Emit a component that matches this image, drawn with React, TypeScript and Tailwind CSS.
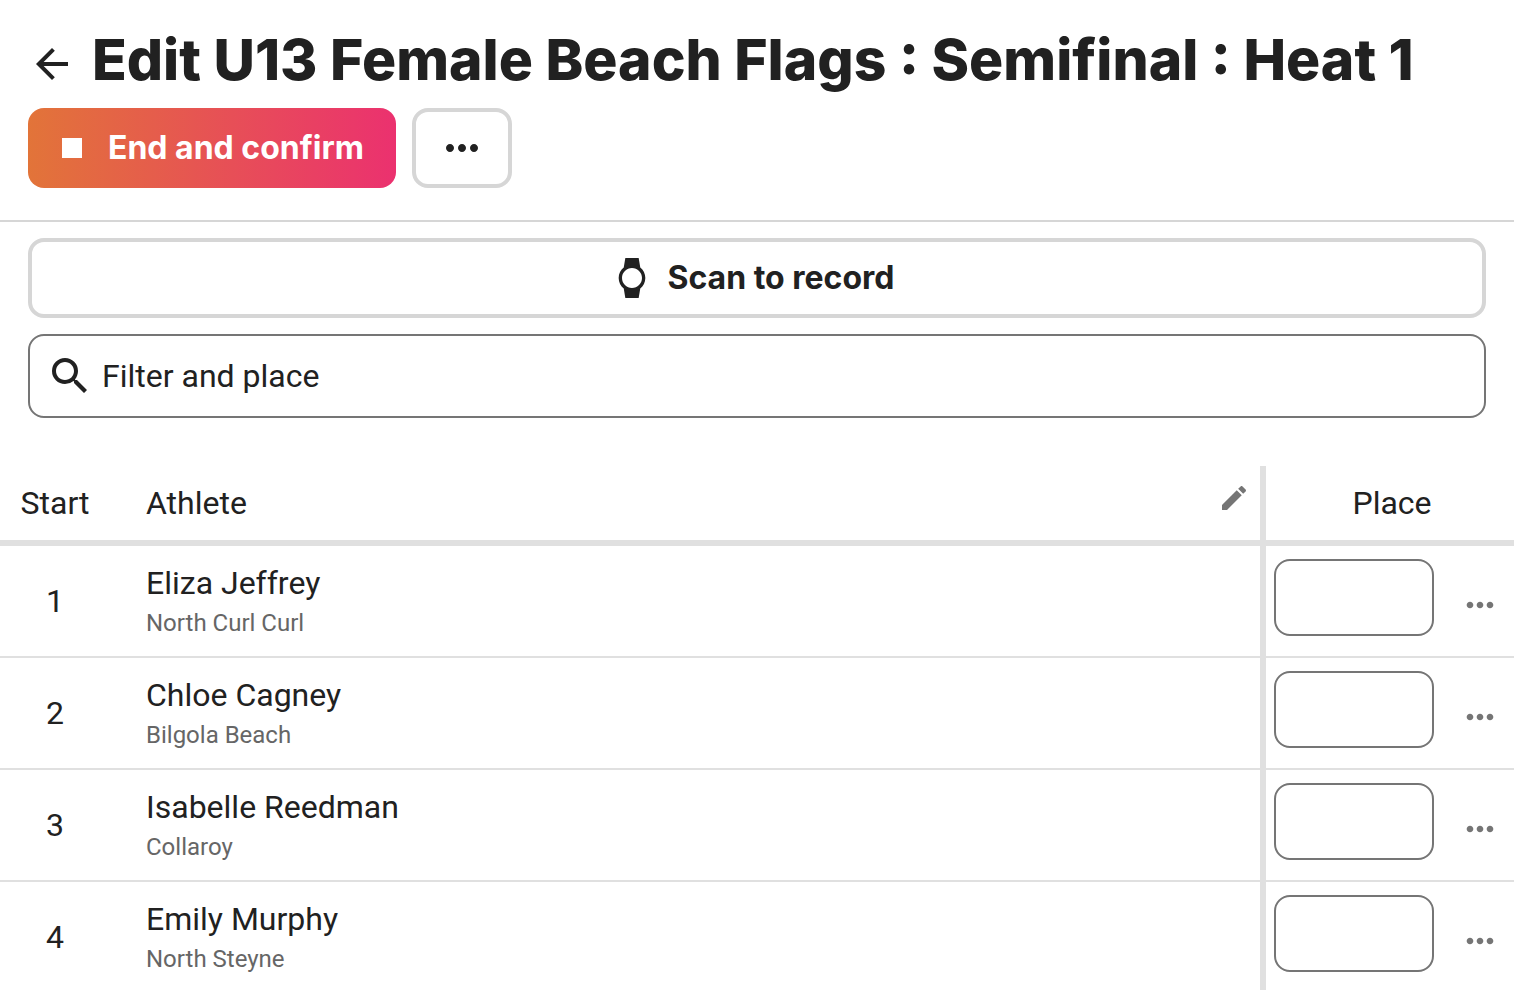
import React from "react";

type IconProps = { path: string; className: string };

function Icon({ path, className }: IconProps) {
  return (
    <svg viewBox="0 0 24 24" fill="currentColor" aria-hidden="true" className={`shrink-0 ${className}`}>
      <path d={path} />
    </svg>
  );
}

const icons = {
  back: "M20 11H7.83l5.59-5.59L12 4l-8 8 8 8 1.41-1.41L7.83 13H20v-2z",
  stop: "M6 6h12v12H6z",
  more: "M6 10c-1.1 0-2 .9-2 2s.9 2 2 2 2-.9 2-2-.9-2-2-2zm12 0c-1.1 0-2 .9-2 2s.9 2 2 2 2-.9 2-2-.9-2-2-2zm-6 0c-1.1 0-2 .9-2 2s.9 2 2 2 2-.9 2-2-.9-2-2-2z",
  watch:
    "M20 12c0-2.54-1.19-4.81-3.04-6.27L16 0H8l-.95 5.73C5.19 7.19 4 9.45 4 12s1.19 4.81 3.05 6.27L8 24h8l.96-5.73C18.81 16.81 20 14.54 20 12zM6 12c0-3.31 2.69-6 6-6s6 2.69 6 6-2.69 6-6 6-6-2.69-6-6z",
  search:
    "M9.5 3A6.5 6.5 0 0 1 16 9.5c0 1.61-.59 3.09-1.56 4.23l.27.27h.79l5 5-1.5 1.5-5-5v-.79l-.27-.27A6.516 6.516 0 0 1 9.5 16 6.5 6.5 0 0 1 3 9.5 6.5 6.5 0 0 1 9.5 3m0 2C7 5 5 7 5 9.5S7 14 9.5 14 14 12 14 9.5 12 5 9.5 5z",
  edit: "M3 17.25V21h3.75L17.81 9.94l-3.75-3.75L3 17.25zM20.71 7.04c.39-.39.39-1.02 0-1.41l-2.34-2.34c-.39-.39-1.02-.39-1.41 0l-1.83 1.83 3.75 3.75 1.83-1.83z",
};

const athletes = [
  { start: 1, name: "Eliza Jeffrey", club: "North Curl Curl" },
  { start: 2, name: "Chloe Cagney", club: "Bilgola Beach" },
  { start: 3, name: "Isabelle Reedman", club: "Collaroy" },
  { start: 4, name: "Emily Murphy", club: "North Steyne" },
];

export default function App() {
  return (
    <div className="h-screen overflow-hidden bg-white font-['Roboto',sans-serif] text-[32px] leading-10 text-[#212121]">
      <header className="border-b-2 border-[#d6d6d6] px-7 pt-6 pb-8">
        <div className="flex items-center gap-4">
          <a href="#events" aria-label="Back" className="mt-2">
            <Icon path={icons.back} className="size-12" />
          </a>
          <h1 className="font-['Inter',sans-serif] text-[57px] leading-[72px] font-extrabold">
            Edit U13 Female Beach Flags : Semifinal : Heat 1
          </h1>
        </div>
        <div className="mt-3 flex gap-4 font-['Inter',sans-serif] font-bold">
          <button
            type="button"
            className="flex h-20 items-center gap-4 rounded-2xl bg-linear-to-r/srgb from-[#e27439] to-[#eb316f] pr-8 pl-6 text-white"
          >
            <Icon path={icons.stop} className="size-10" />
            End and confirm
          </button>
          <button
            type="button"
            aria-label="More actions"
            className="flex h-20 w-25 items-center justify-center rounded-2xl border-4 border-[#d6d6d6]"
          >
            <Icon path={icons.more} className="size-12" />
          </button>
        </div>
      </header>

      <main>
        <div className="flex flex-col gap-4 px-7 pt-4">
          <button
            type="button"
            className="flex h-20 items-center justify-center gap-4 rounded-2xl border-4 border-[#d6d6d6] pr-8 pl-6 font-['Inter',sans-serif] font-bold"
          >
            <Icon path={icons.watch} className="size-10" />
            Scan to record
          </button>
          <label className="flex h-21 items-center gap-2 rounded-2xl border-2 border-[#757575] px-4">
            <Icon path={icons.search} className="size-12" />
            <input
              type="text"
              aria-label="Filter and place"
              placeholder="Filter and place"
              className="min-w-0 flex-1 outline-none placeholder:text-[#212121] placeholder:opacity-100"
            />
          </label>
        </div>

        <table className="mt-12 w-full table-fixed border-separate border-spacing-0 text-left">
          <thead>
            <tr className="h-20">
              <th scope="col" className="w-[110px] border-b-6 border-[#e0e0e0] text-center font-normal">
                Start
              </th>
              <th scope="col" className="border-b-6 border-[#e0e0e0] pr-2.5 pl-9 font-normal">
                <div className="flex items-center justify-between">
                  Athlete
                  <button type="button" aria-label="Edit athletes" className="pb-2.5 text-[#757575]">
                    <Icon path={icons.edit} className="size-8" />
                  </button>
                </div>
              </th>
              <th
                scope="col"
                className="w-[254px] border-b-6 border-l-6 border-[#e0e0e0] pl-1 text-center font-normal"
              >
                Place
              </th>
            </tr>
          </thead>
          <tbody>
            {athletes.map((athlete) => (
              <tr key={athlete.start} className="h-28">
                <td className="border-b-2 border-[#e0e0e0] text-center">{athlete.start}</td>
                <td className="border-b-2 border-[#e0e0e0] pt-1 pl-9">
                  <div>{athlete.name}</div>
                  <div className="text-2xl leading-10 text-[#666666]">{athlete.club}</div>
                </td>
                <td className="border-b-2 border-l-6 border-b-[#e0e0e0] border-l-[#e0e0e0] pr-3.5 pl-2">
                  <div className="flex items-center justify-between">
                    <input
                      type="text"
                      aria-label={`Place for ${athlete.name}`}
                      className="mb-2 h-[77px] w-40 rounded-2xl border-2 border-[#757575] px-4 text-center outline-none"
                    />
                    <button type="button" aria-label={`Options for ${athlete.name}`} className="mt-2 text-[#757575]">
                      <Icon path={icons.more} className="size-10" />
                    </button>
                  </div>
                </td>
              </tr>
            ))}
          </tbody>
        </table>
      </main>
    </div>
  );
}
